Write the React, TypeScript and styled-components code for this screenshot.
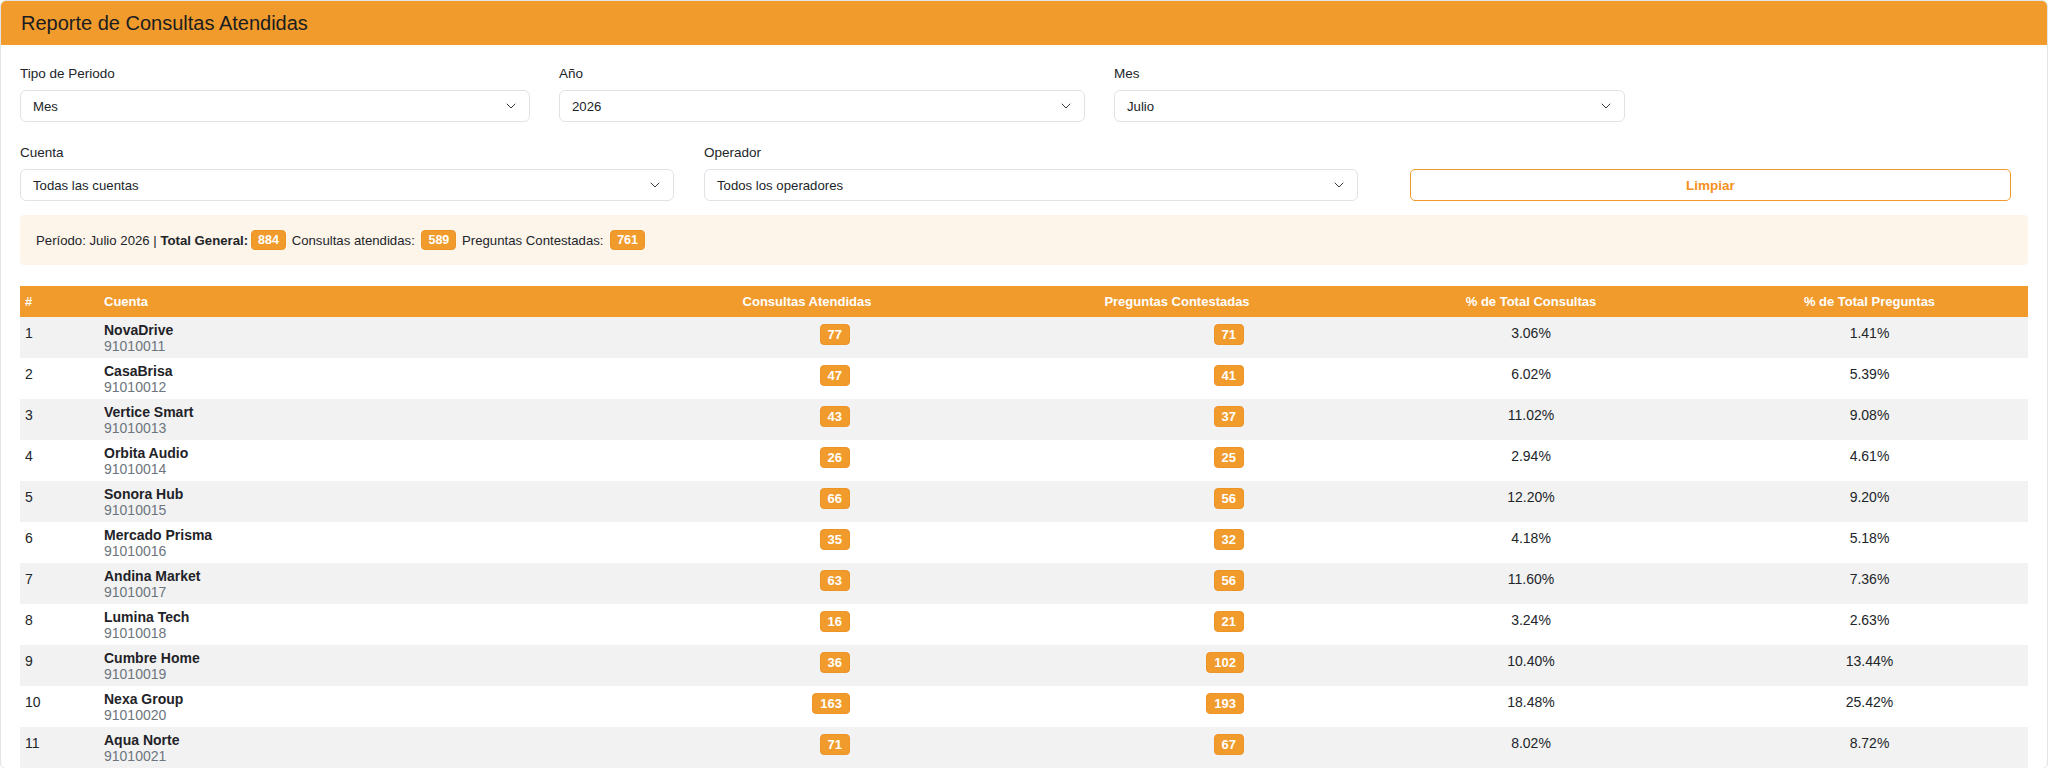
import styled, { createGlobalStyle } from "styled-components";
import { ChevronDown } from "lucide-react";

const ORANGE = "#f19b2c";

const GlobalStyle = createGlobalStyle`
  body {
    margin: 0;
    background: #ffffff;
    font-family: "Liberation Sans", Arial, sans-serif;
    color: #212529;
  }
`;

const Card = styled.div`
  background: #ffffff;
  border: 1px solid #e1e4e8;
  border-radius: 6px;
  overflow: hidden;
`;

const CardHeader = styled.div`
  height: 44px;
  display: flex;
  align-items: center;
  padding: 0 20px;
  background: ${ORANGE};
  font-size: 20px;
  color: #1a1d21;
`;

const CardBody = styled.div`
  padding: 19px 19px 0 19px;
`;

const FilterRow = styled.div<{ $columns: string; $gap: number; $bottom: number }>`
  display: grid;
  grid-template-columns: ${(p) => p.$columns};
  column-gap: ${(p) => p.$gap}px;
  margin-bottom: ${(p) => p.$bottom}px;
`;

const Field = styled.div`
  display: flex;
  flex-direction: column;
  justify-content: flex-end;
`;

const ButtonCell = styled.div`
  display: flex;
  align-items: flex-end;
  padding: 0 17px 0 22px;
`;

const Label = styled.label`
  font-size: 13.5px;
  line-height: 20px;
  margin-bottom: 6px;
  color: #212529;
`;

const SelectBox = styled.div`
  height: 32px;
  box-sizing: border-box;
  display: flex;
  align-items: center;
  justify-content: space-between;
  padding: 0 12px;
  border: 1px solid #dfe2e7;
  border-radius: 6px;
  background: #ffffff;
  font-size: 13.2px;
  color: #212529;

  svg {
    color: #343a40;
    margin-right: -2px;
  }
`;

const ClearButton = styled.button`
  width: 100%;
  height: 32px;
  border: 1px solid ${ORANGE};
  border-radius: 5px;
  background: #ffffff;
  color: #f5901c;
  font-family: inherit;
  font-size: 13.5px;
  font-weight: 700;
  cursor: pointer;
`;

const Summary = styled.div`
  height: 50px;
  display: flex;
  align-items: center;
  padding: 0 16px;
  margin-bottom: 21px;
  background: #fdf4ea;
  border-radius: 4px;
  font-size: 13.2px;
  white-space: pre;
`;

const Badge = styled.span`
  display: inline-block;
  vertical-align: top;
  padding: 2px 7px;
  line-height: 15px;
  border-radius: 4px;
  background: ${ORANGE};
  border: 1px solid #ec9426;
  color: #ffffff;
  font-size: 13px;
  font-weight: 700;
`;

const SummaryBadge = styled(Badge)`
  margin: 0 2px 0 3px;
  padding: 1.5px 6px;
  font-size: 12.5px;
`;

const Table = styled.table`
  width: 100%;
  border-collapse: collapse;
  table-layout: fixed;
`;

const HeadCell = styled.th<{ $align?: string }>`
  height: 31px;
  padding: 0 8px;
  background: ${ORANGE};
  color: #ffffff;
  font-size: 13px;
  font-weight: 700;
  text-align: ${(p) => p.$align ?? "center"};

  &:first-child {
    padding-left: 5px;
  }
`;

const Row = styled.tr`
  &:nth-child(odd) {
    background: #f2f2f2;
  }
`;

const Cell = styled.td<{ $align?: string; $padTop?: number; $padRight?: number }>`
  height: 41px;
  box-sizing: border-box;
  vertical-align: top;
  padding: ${(p) => p.$padTop ?? 7.5}px ${(p) => p.$padRight ?? 8}px 0 8px;
  font-size: 14px;
  line-height: 16px;
  text-align: ${(p) => p.$align ?? "center"};
  color: #212529;

  &:first-child {
    padding-left: 5px;
  }
`;

const AccountName = styled.div`
  font-weight: 700;
  color: #1f2328;
`;

const AccountId = styled.div`
  color: #6c757d;
`;

type Row = {
  name: string;
  id: string;
  consultas: number;
  preguntas: number;
  pctConsultas: string;
  pctPreguntas: string;
};

const rows: Row[] = [
  { name: "NovaDrive", id: "91010011", consultas: 77, preguntas: 71, pctConsultas: "3.06%", pctPreguntas: "1.41%" },
  { name: "CasaBrisa", id: "91010012", consultas: 47, preguntas: 41, pctConsultas: "6.02%", pctPreguntas: "5.39%" },
  { name: "Vertice Smart", id: "91010013", consultas: 43, preguntas: 37, pctConsultas: "11.02%", pctPreguntas: "9.08%" },
  { name: "Orbita Audio", id: "91010014", consultas: 26, preguntas: 25, pctConsultas: "2.94%", pctPreguntas: "4.61%" },
  { name: "Sonora Hub", id: "91010015", consultas: 66, preguntas: 56, pctConsultas: "12.20%", pctPreguntas: "9.20%" },
  { name: "Mercado Prisma", id: "91010016", consultas: 35, preguntas: 32, pctConsultas: "4.18%", pctPreguntas: "5.18%" },
  { name: "Andina Market", id: "91010017", consultas: 63, preguntas: 56, pctConsultas: "11.60%", pctPreguntas: "7.36%" },
  { name: "Lumina Tech", id: "91010018", consultas: 16, preguntas: 21, pctConsultas: "3.24%", pctPreguntas: "2.63%" },
  { name: "Cumbre Home", id: "91010019", consultas: 36, preguntas: 102, pctConsultas: "10.40%", pctPreguntas: "13.44%" },
  { name: "Nexa Group", id: "91010020", consultas: 163, preguntas: 193, pctConsultas: "18.48%", pctPreguntas: "25.42%" },
  { name: "Aqua Norte", id: "91010021", consultas: 71, preguntas: 67, pctConsultas: "8.02%", pctPreguntas: "8.72%" },
];

const Select = ({ value }: { value: string }) => (
  <SelectBox>
    <span>{value}</span>
    <ChevronDown size={16} strokeWidth={1.5} />
  </SelectBox>
);

export default function App() {
  return (
    <>
      <GlobalStyle />
      <Card>
        <CardHeader>Reporte de Consultas Atendidas</CardHeader>
        <CardBody>
          <FilterRow $columns="510px 526px 511px" $gap={29} $bottom={21}>
            <Field>
              <Label>Tipo de Periodo</Label>
              <Select value="Mes" />
            </Field>
            <Field>
              <Label>Año</Label>
              <Select value="2026" />
            </Field>
            <Field>
              <Label>Mes</Label>
              <Select value="Julio" />
            </Field>
          </FilterRow>

          <FilterRow $columns="654px 654px 1fr" $gap={30} $bottom={14}>
            <Field>
              <Label>Cuenta</Label>
              <Select value="Todas las cuentas" />
            </Field>
            <Field>
              <Label>Operador</Label>
              <Select value="Todos los operadores" />
            </Field>
            <ButtonCell>
              <ClearButton>Limpiar</ClearButton>
            </ButtonCell>
          </FilterRow>

          <Summary>
            {"Período: Julio 2026 | "}
            <b>Total General:</b>
            {" "}
            <SummaryBadge>884</SummaryBadge>
            {" Consultas atendidas: "}
            <SummaryBadge>589</SummaryBadge>
            {" Preguntas Contestadas: "}
            <SummaryBadge>761</SummaryBadge>
          </Summary>

          <Table>
            <colgroup>
              <col style={{ width: 76 }} />
              <col style={{ width: 515 }} />
              <col style={{ width: 392 }} />
              <col style={{ width: 348 }} />
              <col style={{ width: 360 }} />
              <col />
            </colgroup>
            <thead>
              <tr>
                <HeadCell $align="left">#</HeadCell>
                <HeadCell $align="left">Cuenta</HeadCell>
                <HeadCell>Consultas Atendidas</HeadCell>
                <HeadCell>Preguntas Contestadas</HeadCell>
                <HeadCell>% de Total Consultas</HeadCell>
                <HeadCell>% de Total Preguntas</HeadCell>
              </tr>
            </thead>
            <tbody>
              {rows.map((r, i) => (
                <Row key={r.id}>
                  <Cell $align="left">{i + 1}</Cell>
                  <Cell $align="left" $padTop={4.5}>
                    <AccountName>{r.name}</AccountName>
                    <AccountId>{r.id}</AccountId>
                  </Cell>
                  <Cell $align="right" $padTop={6.5} $padRight={153}>
                    <Badge>{r.consultas}</Badge>
                  </Cell>
                  <Cell $align="right" $padTop={6.5} $padRight={107}>
                    <Badge>{r.preguntas}</Badge>
                  </Cell>
                  <Cell>{r.pctConsultas}</Cell>
                  <Cell>{r.pctPreguntas}</Cell>
                </Row>
              ))}
            </tbody>
          </Table>
        </CardBody>
      </Card>
    </>
  );
}
